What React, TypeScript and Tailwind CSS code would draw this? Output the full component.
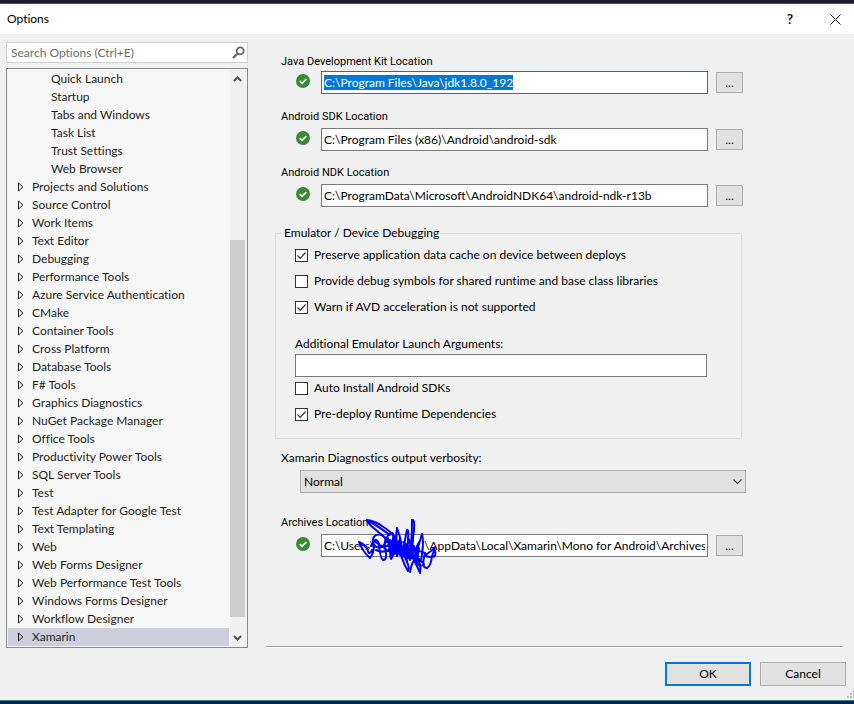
import { useEffect, useId, useRef } from 'react';
import type { ReactNode } from 'react';
import clsx from 'clsx';

const ENVIRONMENT_PAGES = [
  'Quick Launch',
  'Startup',
  'Tabs and Windows',
  'Task List',
  'Trust Settings',
  'Web Browser',
];

const CATEGORIES = [
  'Projects and Solutions',
  'Source Control',
  'Work Items',
  'Text Editor',
  'Debugging',
  'Performance Tools',
  'Azure Service Authentication',
  'CMake',
  'Container Tools',
  'Cross Platform',
  'Database Tools',
  'F# Tools',
  'Graphics Diagnostics',
  'NuGet Package Manager',
  'Office Tools',
  'Productivity Power Tools',
  'SQL Server Tools',
  'Test',
  'Test Adapter for Google Test',
  'Text Templating',
  'Web',
  'Web Forms Designer',
  'Web Performance Test Tools',
  'Windows Forms Designer',
  'Workflow Designer',
  'Xamarin',
];

const SELECTED = 'Xamarin';

export default function App() {
  return (
    <div className="flex min-h-screen flex-col border-y-[3px] border-[#1b1e26] bg-[#f0f0f0] font-['Lato',sans-serif] text-xs leading-4 text-black [font-variant-ligatures:none]">
      <TitleBar />
      <div className="flex grow pr-[11px] pl-1.5">
        <Sidebar />
        <main className="ml-[18px] min-w-0 grow border-b border-white">
          <div className="h-full border-b border-[#a0a0a0]">
            <AndroidSettings />
          </div>
        </main>
      </div>
      <footer className="relative flex justify-end gap-[9px] border-b border-[#2a7ab0] pt-3.5 pr-2 pb-3.5">
        <button type="button" className="h-6 w-[86px] border-2 border-[#0078d7] bg-[#e1e1e1]">OK</button>
        <button type="button" className="h-6 w-[86px] border border-[#adadad] bg-[#e1e1e1]">Cancel</button>
        <ResizeGrip />
      </footer>
    </div>
  );
}

function TitleBar() {
  return (
    <header className="flex h-[31px] items-center border-t border-[#1a5a92] bg-white pl-[7px]">
      <h1 className="grow">Options</h1>
      <button type="button" aria-label="Help" className="w-10 text-sm font-semibold">?</button>
      <button type="button" aria-label="Close" className="flex w-11 justify-center pl-1.5">
        <svg width="11" height="11" viewBox="0 0 11 11" fill="none" stroke="#000">
          <path d="M.5.5l10 10M10.5.5l-10 10" />
        </svg>
      </button>
    </header>
  );
}

function Sidebar() {
  return (
    <aside className="w-[242px] shrink-0 pt-2">
      <div className="flex h-[21px] items-center border border-[#ccced6] bg-white pr-0.5 pl-1">
        <input
          type="search"
          aria-label="Search Options"
          placeholder="Search Options (Ctrl+E)"
          className="min-w-0 grow bg-transparent outline-none placeholder:text-[#6d6d6d]"
        />
        <svg width="13" height="13" viewBox="0 0 13 13" fill="none" stroke="#6a6a6a">
          <circle cx="8.2" cy="4.8" r="3.5" strokeWidth="1.8" />
          <path d="M5.6 7.4L1 12" strokeWidth="2.4" />
        </svg>
      </div>
      <div className="mt-[5px] flex border border-[#828790] bg-[#f6f6f6] p-px">
        <ul role="tree" aria-label="Categories" className="min-w-0 grow">
          {ENVIRONMENT_PAGES.map(name => (
            <li key={name} role="treeitem" className="h-[18px] pl-[43px] leading-[18px] text-[#1e1e1e]">{name}</li>
          ))}
          {CATEGORIES.map(name => (
            <li
              key={name}
              role="treeitem"
              aria-selected={name === SELECTED}
              className={clsx(
                'flex h-[18px] items-center pl-2.5 text-[#1e1e1e]',
                name === SELECTED && 'bg-[#cccedb]',
              )}
            >
              <svg className="mr-2 shrink-0" width="6" height="10" viewBox="0 0 6 10" fill="none" stroke="#1e1e1e">
                <path d="M.5 1v8L4.9 5z" />
              </svg>
              {name}
            </li>
          ))}
        </ul>
        <ScrollBar />
      </div>
    </aside>
  );
}

function ScrollBar() {
  return (
    <div className="ml-px flex w-4 shrink-0 flex-col bg-[#f0f0f0] pr-px" aria-hidden="true">
      <div className="flex h-[18px] items-center justify-center">
        <Chevron className="rotate-180" />
      </div>
      <div className="grow-[152]" />
      <div className="grow-[377] bg-[#cdcdcd]" />
      <div className="grow-[12]" />
      <div className="flex h-[17px] items-center justify-center">
        <Chevron />
      </div>
    </div>
  );
}

function Chevron({ className }: { className?: string }) {
  return (
    <svg className={className} width="9" height="6" viewBox="0 0 9 6" fill="none" stroke="#505050" strokeWidth="2">
      <path d="M.9 1l3.6 3.5L8.1 1" />
    </svg>
  );
}

function AndroidSettings() {
  return (
    <form className="flex flex-col pt-5 pr-[97px] pl-[15px]">
      <PathField label="Java Development Kit Location" value="C:\Program Files\Java\jdk1.8.0_192" className="gap-px" active />
      <PathField label="Android SDK Location" value="C:\Program Files (x86)\Android\android-sdk" className="mt-[15px] gap-[3px]" />
      <PathField label="Android NDK Location" value="C:\ProgramData\Microsoft\AndroidNDK64\android-ndk-r13b" className="mt-3.5 gap-[3px]" />

      <fieldset className="mt-[18px] mr-1 -ml-1.5 min-w-0 border border-[#dcdcdc] pt-1.5 pr-[34px] pb-4 pl-[19px]">
        <legend className="-ml-3 px-px">Emulator / Device Debugging</legend>
        <div className="flex flex-col gap-2.5">
          <CheckBox label="Preserve application data cache on device between deploys" checked />
          <CheckBox label="Provide debug symbols for shared runtime and base class libraries" />
          <CheckBox label="Warn if AVD acceleration is not supported" checked />
        </div>
        <label htmlFor="launch-args" className="mt-[21px] block">Additional Emulator Launch Arguments:</label>
        <input id="launch-args" type="text" className="mt-0.5 block h-[23px] w-full border border-[#7a7a7a] bg-white px-0.5" />
        <div className="mt-[3px] flex flex-col gap-2.5">
          <CheckBox label="Auto Install Android SDKs" />
          <CheckBox label="Pre-deploy Runtime Dependencies" checked />
        </div>
      </fieldset>

      <label htmlFor="verbosity" className="mt-[11px]">Xamarin Diagnostics output verbosity:</label>
      <div className="relative mt-1 ml-[19px]">
        <select id="verbosity" className="block h-[23px] w-full appearance-none border border-[#adadad] bg-[#e1e1e1] px-[3px]">
          <option>Normal</option>
        </select>
        <svg className="pointer-events-none absolute top-2 right-1" width="9" height="7" viewBox="0 0 9 7" fill="none" stroke="#444" strokeWidth="1.2">
          <path d="M.5 1.5l4 4 4-4" />
        </svg>
      </div>

      <PathField
        label="Archives Location"
        value={`C:\\Users\\${' '.repeat(16)}\\AppData\\Local\\Xamarin\\Mono for Android\\Archives`}
        className="mt-[22px] gap-[3px]"
      >
        <Scribble />
      </PathField>
    </form>
  );
}

interface PathFieldProps {
  label: string;
  value: string;
  className: string;
  active?: boolean;
  children?: ReactNode;
}

function PathField({ label, value, className, active, children }: PathFieldProps) {
  const id = useId();
  const ref = useRef<HTMLInputElement>(null);

  useEffect(() => {
    if (active) {
      ref.current?.focus();
      ref.current?.select();
    }
  }, [active]);

  return (
    <div className={clsx('flex flex-col', className)}>
      <label htmlFor={id} className="font-['Roboto',sans-serif] text-[11px] leading-4">{label}</label>
      <div className="relative flex items-center pr-[3px] pl-[15px]">
        <svg className="mr-[11px] mb-[3px] shrink-0" width="14" height="14" viewBox="0 0 14 14" fill="none">
          <circle cx="7" cy="7" r="7" fill="#388a34" />
          <path d="M3.8 7.1l2.3 2.3 4.2-4.3" stroke="#fff" strokeWidth="1.7" />
        </svg>
        <input
          id={id}
          ref={ref}
          type="text"
          defaultValue={value}
          className={clsx(
            'h-[23px] min-w-0 grow border bg-white px-0.5 outline-none selection:bg-[#0078d7] selection:text-white',
            active ? 'border-[#0078d7]' : 'border-[#7a7a7a]',
          )}
        />
        <button type="button" aria-label={`Browse ${label}`} className="ml-2 h-[21px] w-[27px] border border-[#adadad] bg-[#e1e1e1] leading-[19px]">
          ...
        </button>
        {children}
      </div>
    </div>
  );
}

function CheckBox({ label, checked }: { label: string; checked?: boolean }) {
  return (
    <label className="flex items-center">
      <span className="relative mr-1.5 size-[13px]">
        <input
          type="checkbox"
          defaultChecked={checked}
          className="peer block size-[13px] appearance-none border border-[#333] bg-white"
        />
        <svg className="pointer-events-none absolute inset-0 hidden peer-checked:block" width="13" height="13" viewBox="0 0 13 13" fill="none" stroke="#333" strokeWidth="1.2">
          <path d="M2.5 6.5l2.7 2.8 5.3-5.8" />
        </svg>
      </span>
      {label}
    </label>
  );
}

// Pen strokes that hide the user name in the path
function Scribble() {
  return (
    <svg
      className="pointer-events-none absolute -top-4 left-[77px]"
      width="80"
      height="58"
      viewBox="0 0 80 58"
      fill="none"
      stroke="#0000ff"
      strokeWidth="2"
      strokeLinecap="round"
      strokeLinejoin="round"
    >
      <path d="M1 24Q5 34 12 40Q16 35 16 27Q13 20 18 17Q24 15 27 20M1 24Q8 27 10 33Q11 38 14 32" />
      <path d="M32 17Q20 8 9 2Q10 6 18 12Q26 19 35 26M9 2Q17 3 24 8Q32 13 36 18" />
      <path d="M13 28Q18 17 21 26Q22 40 25 42Q30 42 27 30Q25 20 33 15Q37 13 34 26Q31 38 33 41Q38 36 36 22" />
      <path d="M15 26Q22 34 28 24Q32 20 36 30Q42 42 44 30Q43 20 39 10Q37 20 41 34Q44 42 46 34" />
      <path d="M18 32Q30 38 42 22M16 23L32 34L44 24L30 27L46 36L28 23L50 30L33 37L40 26M27 28h14l-12 5 16-2" />
      <path d="M30 20L34 36L37 18L39 38L42 20L44 40L47 26L49 44M32 22l12 14M31 30l15 8M36 20l14 20M38 25l14 12M36 34l14 6" />
      <path d="M41 25Q42 40 50 53Q53 50 45 36Q47 20 49 12Q51 11 50 22Q49 36 52 42Q54 20 54 2Q57 1 56 12Q54 28 53 38" />
      <path d="M38 28L50 40L46 24L56 38L50 20L60 36Q57 44 50 38Q44 32 52 28Q62 30 58 40Q54 43 52 54" />
      <path d="M55 22Q52 35 57 44Q60 50 62 55Q64 48 58 36Q61 26 64 16Q66 22 64 36Q63 46 60 40Q56 32 61 24" />
      <path d="M48 26l5 14 3-12 3 16 2-14M50 34l12 8M48 40l12-4" />
      <path d="M44 36Q58 36 66 46Q62 51 56 41M50 31Q60 32 67 35Q63 50 69 50Q73 48 74 38Q76 34 77 29Q74 33 69 36Q65 38 72 39Q79 40 77 33" />
    </svg>
  );
}

function ResizeGrip() {
  return (
    <svg className="absolute right-0 bottom-0.5" width="8" height="9" viewBox="0 0 8 9" fill="#bfbfbf">
      <path d="M1 7h2v2H1zM4 7h2v2H4zM7 7h1v2H7zM4 4h2v2H4zM7 4h1v2H7zM7 1h1v2H7z" />
    </svg>
  );
}
